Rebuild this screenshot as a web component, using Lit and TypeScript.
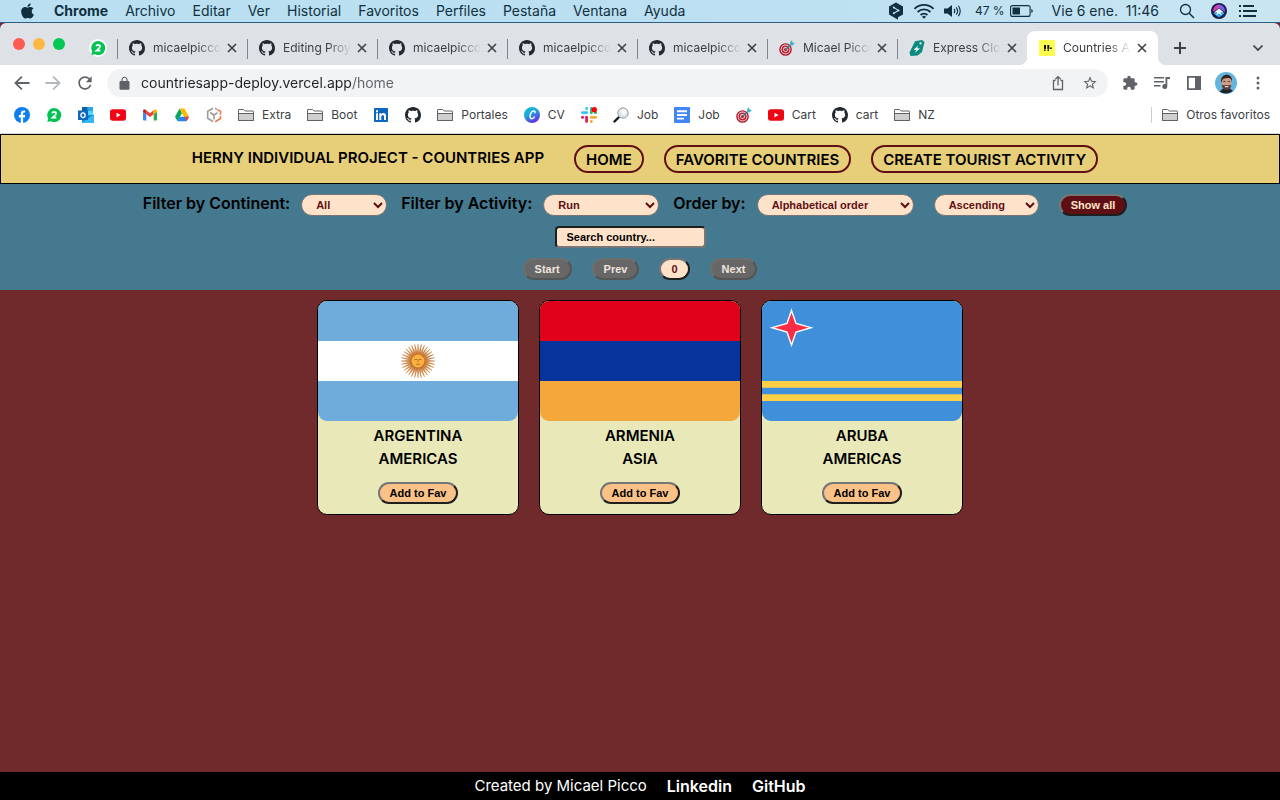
import { LitElement, html, css, svg, nothing } from "lit";
import { customElement, property, state } from "lit/decorators.js";
import { classMap } from "lit/directives/class-map.js";

const githubPath =
  "M8 0C3.58 0 0 3.58 0 8c0 3.54 2.29 6.53 5.47 7.59.4.07.55-.17.55-.38 0-.19-.01-.82-.01-1.49-2.01.37-2.53-.49-2.69-.94-.09-.23-.48-.94-.82-1.13-.28-.15-.68-.52-.01-.53.63-.01 1.08.58 1.23.82.72 1.21 1.87.87 2.33.66.07-.52.28-.87.51-1.07-1.78-.2-3.64-.89-3.64-3.95 0-.87.31-1.59.82-2.15-.08-.2-.36-1.02.08-2.12 0 0 .67-.21 2.2.82.64-.18 1.32-.27 2-.27.68 0 1.36.09 2 .27 1.53-1.04 2.2-.82 2.2-.82.44 1.1.16 1.92.08 2.12.51.56.82 1.27.82 2.15 0 3.07-1.87 3.75-3.65 3.95.29.25.54.73.54 1.48 0 1.07-.01 1.93-.01 2.2 0 .21.15.46.55.38A8.013 8.013 0 0016 8c0-4.42-3.58-8-8-8z";

const slackArms = ["#36c5f0", "#2eb67d", "#ecb22e", "#e01e5a"];

/* Each glyph: [viewBox width, viewBox height, drawing] */
const glyphs: Record<string, [number, number, unknown]> = {
  apple: [384, 512, svg`<path fill="#10303f" d="M318.7 268.7c-.2-36.7 16.4-64.4 50-84.8-18.8-26.9-47.2-41.7-84.7-44.6-35.5-2.8-74.3 20.7-88.5 20.7-15 0-49.4-19.7-76.4-19.7C63.3 141.2 4 184.8 4 273.5q0 39.3 14.4 81.2c12.8 36.7 59 126.7 107.2 125.2 25.2-.6 43-17.9 75.8-17.9 31.8 0 48.3 17.9 76.4 17.9 48.6-.7 90.4-82.5 102.6-119.3-65.2-30.7-61.7-90-61.7-91.9zm-56.6-164.2c27.3-32.4 24.8-61.9 24-72.5-24.1 1.4-52 16.4-67.9 34.9-17.5 19.8-27.8 44.3-25.6 71.9 26.1 2 49.9-11.4 69.5-34.3z"/>`],
  deepl: [16, 18, svg`<path fill="#10303f" d="M8 .5 15 4.400v8.200L10 15.300V17.800l-3-1.800L1 12.600V4.400z"/><path stroke="#bfe2f1" stroke-width="1.100" fill="none" d="M5.800 5.500 10.500 8.400 5.800 11.300"/><circle cx="5.800" cy="5.500" r="1" fill="#bfe2f1"/><circle cx="10.500" cy="8.400" r="1" fill="#bfe2f1"/><circle cx="5.800" cy="11.300" r="1" fill="#bfe2f1"/>`],
  wifi: [22, 16, svg`<g fill="none" stroke="#10303f" stroke-width="1.900"><path d="M1.500 5.800a13.500 13.500 0 0 1 19 0"/><path d="M4.600 9a9 9 0 0 1 12.800 0"/><path d="M7.600 12a4.800 4.800 0 0 1 6.800 0"/></g><path fill="#10303f" d="M11 15.800 9 13.700a2.800 2.800 0 0 1 4 0z"/>`],
  speaker: [18, 14, svg`<path fill="#10303f" d="M0 4.500h3.500L8 1v12L3.500 9.500H0z"/><g fill="none" stroke="#10303f" stroke-width="1.100"><path d="M10 4.800a3.500 3.500 0 0 1 0 4.400"/><path d="M12.200 3.300a6 6 0 0 1 0 7.400"/><path d="M14.400 1.800a9 9 0 0 1 0 10.400"/></g>`],
  battery: [24, 12, svg`<rect x=".6" y=".6" width="19.500" height="10.800" rx="2" fill="none" stroke="#10303f" stroke-width="1.100"/><rect x="2.500" y="2.500" width="7.500" height="7" fill="#10303f"/><path fill="#10303f" d="M21.300 4v4q1.500-.5 1.500-2t-1.500-2z"/>`],
  spotlight: [16, 16, svg`<circle cx="6.500" cy="6.500" r="5" fill="none" stroke="#10303f" stroke-width="1.300"/><path stroke="#10303f" stroke-width="1.500" d="m10.200 10.200 4.800 4.800"/>`],
  siri: [16, 16, svg`<circle cx="8" cy="8" r="8" fill="#171c4c"/><path fill="#d63fa6" d="M8 1.500A6.500 6.500 0 0 0 2 9l6-4z"/><path fill="#7b5cf0" d="M8 1.500a6.500 6.500 0 0 1 6 7.500L8 5z"/><path fill="#34a6e8" d="M2.500 10.500 8 7l5.500 3.500L8 14.500z"/><path fill="#e8f6ff" d="M8 5.500 13 9.500 9.500 9.300 11 12.500 8 10.500 5 12.500 6.500 9.300 3 9.500z"/>`],
  list: [18, 14, svg`<g fill="#10303f"><rect width="2" height="2" y="1"/><rect width="2" height="2" y="6"/><rect width="2" height="2" y="11"/><rect x="4" y="1" width="11" height="2"/><rect x="4" y="6" width="14" height="2"/><rect x="4" y="11" width="13" height="2"/></g>`],
  github: [16, 16, svg`<path fill="#24292f" d=${githubPath}/>`],
  whatsapp: [16, 16, svg`<path fill="#05c352" d="M8.300 1A7 7 0 1 1 5 14.200L1.300 15l.9-3.500A7 7 0 0 1 8.300 1z"/><path fill="none" stroke="#fff" stroke-width="1.700" d="M6.200 6.300Q6.500 4.900 8.200 4.900 10 4.900 10 6.400 10 7.400 8.400 8.800L6.500 10.600H10.300"/>`],
  dart: [16, 16, svg`<circle cx="6.500" cy="9.500" r="6.300" fill="#b3152b"/><circle cx="6.500" cy="9.500" r="4.900" fill="#f1e3e5"/><circle cx="6.500" cy="9.500" r="4" fill="#c21f35"/><circle cx="6.500" cy="9.500" r="2.400" fill="#f1e3e5"/><circle cx="6.500" cy="9.500" r="1.500" fill="#b3152b"/><path stroke="#2b8794" stroke-width="1.400" d="M6.500 9.500 12.500 4"/><path fill="#46b5c4" d="M11 5V2.500L13 0l.5 2.500L16 3l-2.500 2.500z"/>`],
  tag: [16, 16, svg`<path fill="#0b8a80" d="M6 1.300 13 0 15.500 2 13 12 8.500 15.500 1.500 16 .5 12.500z"/><circle cx="11.500" cy="3.300" r="1.100" fill="#fff"/><path fill="#fff" d="M9.500 5.500 4.500 9.700l3 .3L5.500 13l5.500-4.400-3-.3z"/>`],
  henry: [16, 16, svg`<path fill="#ffff52" d="M0 0h16v16H0z"/><path fill="#111" d="M5 5h2v4H5zM8.300 5h2v4h-2zM5 9.500h1.500V11H5zM8.500 9.500H10V11H8.500zM11 7.500h1.800V9H11z"/>`],
  close: [10, 10, svg`<path fill="none" stroke="#3c4043" stroke-width="1.600" d="m1 1 8 8M9 1 1 9"/>`],
  plus: [12, 12, svg`<path stroke="#3c4043" stroke-width="2" d="M6 0v12M0 6h12"/>`],
  chevron: [12, 8, svg`<path fill="none" stroke="#3c4043" stroke-width="1.700" d="m1.500 1.500 4.500 4.500 4.500-4.500"/>`],
  back: [24, 24, svg`<path fill="#5f6368" d="M22 10.800H6.200l6.500-6.500L11 2.600l-9.400 9.400 9.400 9.400 1.700-1.700-6.500-6.500H22z"/>`],
  forward: [24, 24, svg`<path fill="#b4b8bd" d="M2 10.800h15.800l-6.500-6.500L13 2.600l9.400 9.400-9.400 9.400-1.700-1.700 6.500-6.500H2z"/>`],
  reload: [24, 24, svg`<path fill="#5f6368" d="M17.650 6.350C16.200 4.900 14.210 4 12 4c-4.420 0-7.990 3.580-7.990 8s3.570 8 7.990 8c3.730 0 6.840-2.550 7.730-6h-2.080c-.82 2.330-3.040 4-5.650 4-3.310 0-6-2.690-6-6s2.690-6 6-6c1.660 0 3.140.69 4.220 1.780L13 11h7V4l-2.350 2.350z"/>`],
  lock: [24, 24, svg`<path fill="#5f6368" d="M18 8h-1V6c0-2.760-2.240-5-5-5S7 3.240 7 6v2H6c-1.100 0-2 .9-2 2v10c0 1.100.9 2 2 2h12c1.100 0 2-.9 2-2V10c0-1.100-.9-2-2-2zm-2.900 0H8.900V6c0-1.710 1.390-3.100 3.100-3.100s3.100 1.390 3.100 3.100v2z"/>`],
  share: [16, 16, svg`<path fill="none" stroke="#5f6368" stroke-width="1.300" d="M5.500 5.500h-2v9h9v-9h-2M8 10.500V1.800M5.300 4.300 8 1.600l2.700 2.700"/>`],
  star: [24, 24, svg`<path fill="#5f6368" d="M22 9.240l-7.190-.62L12 2 9.190 8.630 2 9.240l5.460 4.730L5.820 21 12 17.270 18.180 21l-1.630-7.030L22 9.240zM12 15.400l-3.760 2.270 1-4.280-3.320-2.880 4.380-.38L12 6.100l1.710 4.040 4.380.38-3.320 2.880 1 4.280L12 15.400z"/>`],
  extension: [24, 24, svg`<path fill="#5f6368" d="M20.500 11H19V7c0-1.100-.9-2-2-2h-4V3.500C13 2.120 11.880 1 10.500 1S8 2.120 8 3.500V5H4c-1.100 0-1.990.9-1.990 2v3.800H3.500c1.490 0 2.700 1.210 2.700 2.700s-1.210 2.700-2.700 2.700H2V20c0 1.100.9 2 2 2h3.800v-1.500c0-1.490 1.210-2.700 2.700-2.700 1.490 0 2.700 1.210 2.700 2.700V22H17c1.100 0 2-.9 2-2v-4h1.500c1.380 0 2.500-1.120 2.500-2.500S21.880 11 20.500 11z"/>`],
  queue: [16, 14, svg`<path fill="#5f6368" d="M0 1h10v1.500H0zM0 5h10v1.500H0zM0 9h6.500v1.500H0zM11.500 1H16v2h-2.700v7.500a2.500 2.500 0 1 1-1.800-2.400z"/>`],
  panel: [14, 14, svg`<path fill="#5f6368" fill-rule="evenodd" d="M0 0h14v14H0zM1.800 1.800v10.400H8V1.800z"/>`],
  avatar: [22, 22, svg`<circle cx="11" cy="11" r="11" fill="#62b5dc"/><path fill="#23242c" d="M4.500 19.500 9 16h5l4 3a11 11 0 0 1-13.500.5z"/><ellipse cx="11.500" cy="10.500" rx="5" ry="6.800" fill="#cf9c86"/><path fill="#38241f" d="M6 11Q5 3.500 11.500 2.500 18 3 17 11 16.500 6.500 14 6 9 5.500 7.500 7.500z"/><path fill="#5d3d34" d="M6.700 12.500q1 1 2.300.8 2.500-.8 5 0 1.300.2 2.300-.8-.5 5.500-5 5.500-4.100-.5-4.600-5.500z"/><path stroke="#fff" d="M9.800 14.700h3.600"/><path stroke="#4a2e28" d="M8.300 9.500h2M12.800 9.500h2"/>`],
  dots: [4, 16, svg`<g fill="#5f6368"><circle cx="2" cy="3" r="1.500"/><circle cx="2" cy="8" r="1.500"/><circle cx="2" cy="13" r="1.500"/></g>`],
  facebook: [16, 16, svg`<circle cx="8" cy="8" r="8" fill="#0d7ef2"/><path fill="#fff" d="M6.800 16v-5.500H4.900V8h1.900V6.500c0-2 1.200-3.100 3-3.100.7 0 1.400.1 1.400.1v2h-.9c-1 0-1.200.6-1.200 1.200V8h2.100l-.4 2.500H9.100V16z"/>`],
  outlook: [16, 16, svg`<path fill="#1490df" d="M4 0h11v16H4z"/><path fill="#0f5fa8" d="M4 0h5.500v4H4z"/><path fill="#28a8ea" d="M9.500 0H15v4H9.500z"/><path fill="#50d9ff" d="M9.500 4H15v4H9.500z"/><path fill="#1a86d8" d="M4 10l12-2.500V15a1 1 0 0 1-1 1H5z"/><path fill="#35b8f1" d="m16 7.500-12 8V16h11a1 1 0 0 0 1-1z"/><path fill="#0f66bd" d="M0 3.500h10V13H0z"/><ellipse cx="5" cy="8.200" rx="2.100" ry="2.400" fill="none" stroke="#fff" stroke-width="1.300"/>`],
  youtube: [16, 16, svg`<rect y="2.300" width="16" height="11.500" rx="2.800" fill="#f00514"/><path fill="#fff" d="M6.500 5.700v4.700l4-2.350z"/>`],
  gmail: [16, 16, svg`<path fill="#4285f4" d="M1 4.500 4.300 7v6.500H2a1 1 0 0 1-1-1z"/><path fill="#34a853" d="M11.700 7 15 4.500v8a1 1 0 0 1-1 1h-2.300z"/><path fill="#ea4335" d="M4.300 3.300 8 6.200l3.700-2.900V7.200L8 10 4.300 7.200z"/><path fill="#c5221f" d="M1 4q0-2 2-1.600l1.300.9v3.900L1 4.800z"/><path fill="#fbbc04" d="M15 4q0-2-2-1.600l-1.300.9v3.900L15 4.800z"/>`],
  drive: [16, 16, svg`<path fill="#0ba55b" d="M5.500 1.500 8 5.900 3.500 14.200 1 9.800z"/><path fill="#ffba00" d="M5.500 1.500h5l4.500 8.300h-5z"/><path fill="#2684fc" d="M5.800 9.800H15L12.500 14.200h-9z"/><path fill="#ea4335" d="M10.300 9.800H15l-2.500 4.400z"/>`],
  cube: [16, 16, svg`<g fill="none" stroke-width="1.600"><path stroke="#9c9c9c" d="M7 1.300 1.700 4.200v7L7 14.500M9 1.300l2 1.100M4 5.500 8 8v4.500M8 8l3.500-2.200"/><path stroke="#ea7a48" d="M11.500 2.700 14.500 4.300v3.500M14.500 9v2.500l-5.300 3.200"/></g>`],
  folder: [16, 16, svg`<path fill="#fff" stroke="#5f6368" stroke-width="1" d="M.5 13.500V3q0-.5.5-.5h4.500l1.700 1.500h7.800q.5 0 .5.500v9z"/><path fill="#cfcfcf" stroke="#5f6368" stroke-width="1" d="M.5 6.500h15v7H.5z"/>`],
  linkedin: [16, 16, svg`<rect x="1" y="1" width="14" height="14" rx="1" fill="#0a66c2"/><path fill="#fff" d="M3 6.300h2V13H3zM3 3.200h2v2H3zM6.300 6.300h2v.9q.7-1.100 2.100-1.100 2.600 0 2.600 3V13h-2V9.500q0-1.600-1.200-1.600-1.500 0-1.500 1.700V13h-2z"/>`],
  canva: [16, 16, svg`<defs><linearGradient id="cv" x1="0" y1="0" x2=".6" y2="1"><stop offset="0" stop-color="#08c8cf"/><stop offset=".5" stop-color="#1fa3da"/><stop offset="1" stop-color="#6a2be5"/></linearGradient></defs><circle cx="8" cy="8" r="8" fill="url(#cv)"/><path fill="none" stroke="#fff" stroke-width="1.400" d="M10.800 6.200q.8-2.200-1-2.300-2.300.2-3.500 3.500-.9 3.800 1.200 4.300 2 0 3.300-2.200"/>`],
  slack: [16, 16, svg`${slackArms.map(
    (c, i) => svg`<g fill=${c} transform="rotate(${i * 90} 8 8)"><rect x="0" y="4.200" width="7.200" height="2.800" rx="1.400"/><rect x="4.300" y="0" width="2.800" height="3" rx="1.300"/></g>`
  )}<circle cx="13.300" cy="2.700" r="2.700" fill="#f00"/>`],
  magnifier: [16, 16, svg`<path stroke="#16191c" stroke-width="2.400" stroke-linecap="round" d="M1.500 14.500 5.500 10.500"/><circle cx="10" cy="6" r="5.200" fill="#dde4ea" stroke="#9a9ea3"/><circle cx="11" cy="5" r="2.700" fill="#f7f9fb"/>`],
  docs: [16, 16, svg`<rect width="16" height="16" rx="1" fill="#4285f4"/><path fill="#fff" d="M3 3.300h10v1.900H3zM3 7h10v1.900H3zM3 10.700h7v1.900H3z"/>`],
};

const icon = (name: string, width = 16, height = width) => {
  const [w, h, drawing] = glyphs[name];
  return html`<svg width=${width} height=${height} viewBox="0 0 ${w} ${h}" aria-hidden="true">${drawing}</svg>`;
};

const shared = css`
  * { box-sizing: border-box; }
  svg { display: block; flex: none; }
  button { font: inherit; color: inherit; cursor: pointer; }
  a { color: inherit; text-decoration: none; }
`;

@customElement("mac-menu-bar")
class MacMenuBar extends LitElement {
  static styles = [shared, css`
    :host { display: block; }
    .bar {
      display: flex; align-items: center; justify-content: space-between; height: 23px;
      padding: 0 23px 0 21px; border-bottom: 1px solid #2d5f86;
      background: linear-gradient(90deg, #b9dff0, #bce0f1 60%, #c9e5f2);
      color: #10303f; font: 400 14px/22px Inter, sans-serif; white-space: nowrap;
    }
    .menus, .status { display: flex; align-items: center; gap: 17px; }
    .status { gap: 9px; }
    button { border: 0; padding: 0; background: none; }
    .app { font-weight: 700; }
    .logo { margin-right: 3px; }
    .power { display: flex; align-items: center; gap: 5px; font-size: 12px; padding-left: 4px; }
    .clock { padding: 0 11px 0 9px; }
    .siri { padding: 0 3px 0 7px; }
  `];
  render() {
    const menus = ["Archivo", "Editar", "Ver", "Historial", "Favoritos", "Perfiles", "Pestaña", "Ventana", "Ayuda"];
    return html`<div class="bar">
      <div class="menus">
        <button class="logo" aria-label="Apple">${icon("apple", 13, 18)}</button>
        <button class="app">Chrome</button>
        ${menus.map((m) => html`<button>${m}</button>`)}
      </div>
      <div class="status">
        ${icon("deepl", 16, 18)} ${icon("wifi", 22, 16)} ${icon("speaker", 18, 14)}
        <span class="power">47 % ${icon("battery", 24, 12)}</span>
        <span class="clock">Vie 6 ene.&nbsp; 11:46</span>
        <button aria-label="Spotlight">${icon("spotlight")}</button>
        <button class="siri" aria-label="Siri">${icon("siri")}</button>
        <button aria-label="Centro de notificaciones">${icon("list", 18, 14)}</button>
      </div>
    </div>`;
  }
}

type Bookmark = { icon: string; label?: string };

@customElement("browser-chrome")
class BrowserChrome extends LitElement {
  static styles = [shared, css`
    :host { display: block; font: 400 12px/16px Inter, sans-serif; color: #3c4043; }
    button { border: 0; padding: 0; background: none; }
    .strip { display: flex; height: 42px; padding: 8px 16px 0 13px; background: #dee1e6; border-radius: 6px 6px 0 0; }
    .lights { display: flex; gap: 8px; padding-top: 7px; width: 76px; }
    .light { width: 12px; height: 12px; border-radius: 50%; background: #ff5a52; }
    .light.mid { background: #fdb843; }
    .light.go { background: #00c853; }
    .pinned { display: grid; place-items: center; width: 18px; height: 18px; margin-top: 8px; border-radius: 50%; background: #fff; }
    .tabs { display: flex; padding-left: 10px; }
    .tab { position: relative; display: flex; align-items: center; width: 130px; height: 34px; padding: 0 10px 0 12px; }
    .tab::before { content: ""; position: absolute; left: 0; top: 8px; width: 1px; height: 20px; background: #80868b; }
    .title {
      flex: 1; min-width: 0; margin: 0 6px 0 8px; overflow: hidden; white-space: nowrap; text-align: left;
      mask-image: linear-gradient(90deg, #000 65%, transparent);
    }
    .tab.active { width: 131px; padding-right: 11px; background: #fff; border-radius: 8px 8px 0 0; }
    .tab.active::before, .tab.active::after {
      content: ""; position: absolute; top: auto; bottom: 0; left: -8px; width: 8px; height: 8px;
      background: radial-gradient(circle at 0 0, transparent 8px, #fff 8px);
    }
    .tab.active::after { left: auto; right: -8px; background: radial-gradient(circle at 100% 0, transparent 8px, #fff 8px); }
    .new { padding-left: 16px; }
    .more { margin-left: auto; }
    .tools { display: flex; align-items: center; height: 36px; padding: 0 20px 0 13px; background: #fff; }
    .nav { display: flex; align-items: center; gap: 13px; margin-right: 12px; }
    .omnibox { display: flex; flex: 1; align-items: center; height: 28px; padding: 0 10px; border-radius: 14px; background: #f1f3f4; gap: 16px; }
    .url {
      flex: 1; min-width: 0; margin-left: -7px; border: 0; padding: 0; outline: 0; font: 400 14px/20px Inter, sans-serif;
      color: transparent; background: linear-gradient(90deg, #202124 211px, #5f6368 211px); background-clip: text; -webkit-background-clip: text;
    }
    .actions { display: flex; align-items: center; margin-left: 6px; }
    .actions button { display: grid; place-items: center; width: 32px; }
    .actions .menu { margin-right: -14px; }
    .marks { display: flex; align-items: center; height: 33px; padding: 0 10px 4px 14px; background: #fff; border-bottom: 1px solid #d5d7da; gap: 16px; }
    .mark { display: flex; align-items: center; gap: 8px; white-space: nowrap; }
    .others { margin-left: auto; padding-left: 10px; border-left: 1px solid #c9ccd0; }
  `];
  private tabs = [
    ["github", "micaelpicco"], ["github", "Editing Proy"], ["github", "micaelpicco"], ["github", "micaelpicco"],
    ["github", "micaelpicco"], ["dart", "Micael Picco"], ["tag", "Express Clo"], ["henry", "Countries A"],
  ];
  private bookmarks: Bookmark[] = [
    { icon: "facebook" }, { icon: "whatsapp" }, { icon: "outlook" }, { icon: "youtube" }, { icon: "gmail" },
    { icon: "drive" }, { icon: "cube" }, { icon: "folder", label: "Extra" }, { icon: "folder", label: "Boot" },
    { icon: "linkedin" }, { icon: "github" }, { icon: "folder", label: "Portales" }, { icon: "canva", label: "CV" },
    { icon: "slack" }, { icon: "magnifier", label: "Job" }, { icon: "docs", label: "Job" }, { icon: "dart" },
    { icon: "youtube", label: "Cart" }, { icon: "github", label: "cart" }, { icon: "folder", label: "NZ" },
  ];
  render() {
    return html`
      <div class="strip">
        <div class="lights"><span class="light"></span><span class="light mid"></span><span class="light go"></span></div>
        <button class="pinned" aria-label="WhatsApp">${icon("whatsapp")}</button>
        <div class="tabs">
          ${this.tabs.map(([name, title], i) => html`
            <div class=${classMap({ tab: true, active: i === this.tabs.length - 1 })}>
              ${icon(name)}<span class="title">${title}</span>
              <button aria-label="Cerrar">${icon("close", 10)}</button>
            </div>`)}
        </div>
        <button class="new" aria-label="Nueva pestaña">${icon("plus", 12)}</button>
        <button class="more" aria-label="Buscar pestañas">${icon("chevron", 12, 8)}</button>
      </div>
      <div class="tools">
        <div class="nav">
          <button aria-label="Atrás">${icon("back", 18)}</button>
          <button aria-label="Adelante">${icon("forward", 18)}</button>
          <button aria-label="Recargar">${icon("reload", 20)}</button>
        </div>
        <div class="omnibox">
          ${icon("lock", 15)}
          <input class="url" aria-label="Dirección" .value=${"countriesapp-deploy.vercel.app/home"} spellcheck="false" />
          <button aria-label="Compartir">${icon("share")}</button>
          <button aria-label="Favorito">${icon("star")}</button>
        </div>
        <div class="actions">
          <button aria-label="Extensiones">${icon("extension", 16)}</button>
          <button aria-label="Multimedia">${icon("queue", 16, 14)}</button>
          <button aria-label="Panel lateral">${icon("panel", 14)}</button>
          <button aria-label="Perfil">${icon("avatar", 22)}</button>
          <button class="menu" aria-label="Menú">${icon("dots", 4, 16)}</button>
        </div>
      </div>
      <div class="marks">
        ${this.bookmarks.map((b) => html`<a class="mark" href="#">${icon(b.icon)}${b.label ?? nothing}</a>`)}
        <a class="mark others" href="#">${icon("folder")}Otros favoritos</a>
      </div>`;
  }
}

const rays = Array.from({ length: 32 }, (_, i) => i * 11.25);
const flags: Record<string, unknown> = {
  ARGENTINA: svg`<path fill="#6fabdb" d="M0 0h200v120H0z"/><path fill="#fff" d="M0 40h200v40H0z"/>
    ${rays.map((a) => svg`<path fill="#c67a35" d="M99.100 53 100 43 100.900 53z" transform="rotate(${a} 100 60)" stroke="#c67a35" stroke-width=".4"/>`)}
    <circle cx="100" cy="60" r="7" fill="#fbb040" stroke="#c1762f" stroke-width="1.200"/>
    <path fill="none" stroke="#b5702b" d="M96.500 58.500h2.500M101 58.500h2.500M98.200 63.300h3.600M100 58v3"/>`,
  ARMENIA: svg`<path fill="#e1001a" d="M0 0h200v40H0z"/><path fill="#07339c" d="M0 40h200v40H0z"/><path fill="#f6a739" d="M0 80h200v40H0z"/>`,
  ARUBA: svg`<path fill="#3f8fda" d="M0 0h200v120H0z"/><path fill="#ffcf46" d="M0 80h200v6.700H0zM0 93.300h200v6.700H0z"/>
    <path fill="#fb2c43" stroke="#fff" stroke-width="1.400" d="M29.500 9.500 34 22.500 49 26.700 34 31 29.500 44 25 31 10 26.700 25 22.500z"/>`,
};

@customElement("country-card")
class CountryCard extends LitElement {
  @property() name = "";
  @property() continent = "";
  @state() private favorite = false;
  static styles = [shared, css`
    :host { display: block; }
    .card {
      display: flex; flex-direction: column; align-items: center; width: 202px; padding-bottom: 10px;
      border: 1px solid #000; border-radius: 10px; background: #e9e8b8; color: #000;
    }
    .flag { border-radius: 9px; }
    .name, .continent { margin: 0; font: 600 15px/23px Inter, sans-serif; }
    .name { margin-top: 3px; }
    .fav {
      margin-top: 12px; height: 22px; padding: 0 10px; border: 2px solid; border-color: #767676 #1e1e1e #1e1e1e #767676;
      border-radius: 11px; background: #fbc287; font: 700 11px/16px "Liberation Sans", Arial, sans-serif;
    }
  `];
  render() {
    return html`<article class="card">
      <svg class="flag" width="200" height="120" viewBox="0 0 200 120" role="img" aria-label=${this.name}>${flags[this.name]}</svg>
      <h2 class="name">${this.name}</h2>
      <p class="continent">${this.continent}</p>
      <button class="fav" aria-pressed=${this.favorite} @click=${() => (this.favorite = !this.favorite)}>Add to Fav</button>
    </article>`;
  }
}

@customElement("app-root")
class AppRoot extends LitElement {
  static styles = [shared, css`
    :host { display: flex; flex-direction: column; min-height: 100vh; background: #702a2c; color: #000; font: 400 15px/20px Inter, sans-serif; }
    .top {
      display: flex; align-items: center; justify-content: center; gap: 20px; height: 50px; padding-left: 10px;
      border: 1px solid #000; background: #e7ce79; font-weight: 600;
    }
    .title { margin: 0 10px 2px 0; font-size: 15px; font-weight: 600; }
    .link { height: 28px; padding: 0 10px; border: 2px solid #5f0f14; border-radius: 14px; line-height: 25px; }
    .filters { display: flex; flex-direction: column; align-items: center; gap: 10px; padding: 10px; background: #44798f; }
    .filters, select, input { font: 700 11px/16px "Liberation Sans", Arial, sans-serif; }
    .row { display: flex; align-items: center; gap: 20px; }
    .row.main { padding-right: 10px; }
    .group { display: flex; align-items: center; gap: 11px; margin-right: -6px; }
    .group.last { margin-right: 0; }
    .label { padding-bottom: 3px; font: 600 16px/19px Inter, sans-serif; }
    select, .search, .pill { height: 22px; }
    select { border: 1px solid #767676; border-radius: 11px; padding: 0 0 0 10px; background: #fee3ca; color: #5f0f14; }
    .continent { width: 86px; }
    .activity { width: 116px; }
    .order { width: 157px; }
    .direction { width: 105px; }
    .search { width: 151px; margin-right: 20px; padding: 0 10px; border: 2px solid; border-color: #1e1e1e #767676 #767676 #1e1e1e; border-radius: 4px; background: #fee3ca; }
    .search::placeholder { color: #000; opacity: 1; }
    .pill { padding: 0 10px; border: 2px solid; border-color: #767676 #1e1e1e #1e1e1e #767676; border-radius: 11px; }
    .all { background: #5f0f14; color: #fee3ca; }
    .page { background: #fee3ca; color: #5f0f14; }
    .pill:disabled { background: #676767; border-color: #6e6e6e #555 #555 #6e6e6e; color: #efe6df; }
    .cards { display: flex; flex: 1; flex-wrap: wrap; align-content: flex-start; justify-content: center; gap: 20px; padding: 10px; }
    .foot { display: flex; align-items: center; justify-content: center; gap: 20px; height: 28px; background: #000; color: #fff; }
    .foot a { font-size: 16px; font-weight: 600; }
  `];
  render() {
    return html`
      <mac-menu-bar></mac-menu-bar>
      <browser-chrome></browser-chrome>
      <header class="top">
        <h1 class="title">HERNY INDIVIDUAL PROJECT - COUNTRIES APP</h1>
        <a class="link" href="#home">HOME</a>
        <a class="link" href="#favorites">FAVORITE COUNTRIES</a>
        <a class="link" href="#create">CREATE TOURIST ACTIVITY</a>
      </header>
      <section class="filters">
        <div class="row main">
          <div class="group">
            <label class="label" for="continent">Filter by Continent:</label>
            <select id="continent" class="continent"><option>All</option></select>
          </div>
          <div class="group">
            <label class="label" for="activity">Filter by Activity:</label>
            <select id="activity" class="activity"><option>Run</option></select>
          </div>
          <div class="group last">
            <label class="label" for="order">Order by:</label>
            <select id="order" class="order"><option>Alphabetical order</option></select>
          </div>
          <select class="direction" aria-label="Direction"><option>Ascending</option></select>
          <button class="pill all">Show all</button>
        </div>
        <input class="search" type="text" aria-label="Search country" placeholder="Search country..." />
        <div class="row">
          <button class="pill" disabled>Start</button>
          <button class="pill" disabled>Prev</button>
          <button class="pill page">0</button>
          <button class="pill" disabled>Next</button>
        </div>
      </section>
      <main class="cards">
        <country-card name="ARGENTINA" continent="AMERICAS"></country-card>
        <country-card name="ARMENIA" continent="ASIA"></country-card>
        <country-card name="ARUBA" continent="AMERICAS"></country-card>
      </main>
      <footer class="foot">
        <span>Created by Micael Picco</span>
        <a href="#linkedin">Linkedin</a>
        <a href="#github">GitHub</a>
      </footer>`;
  }
}
